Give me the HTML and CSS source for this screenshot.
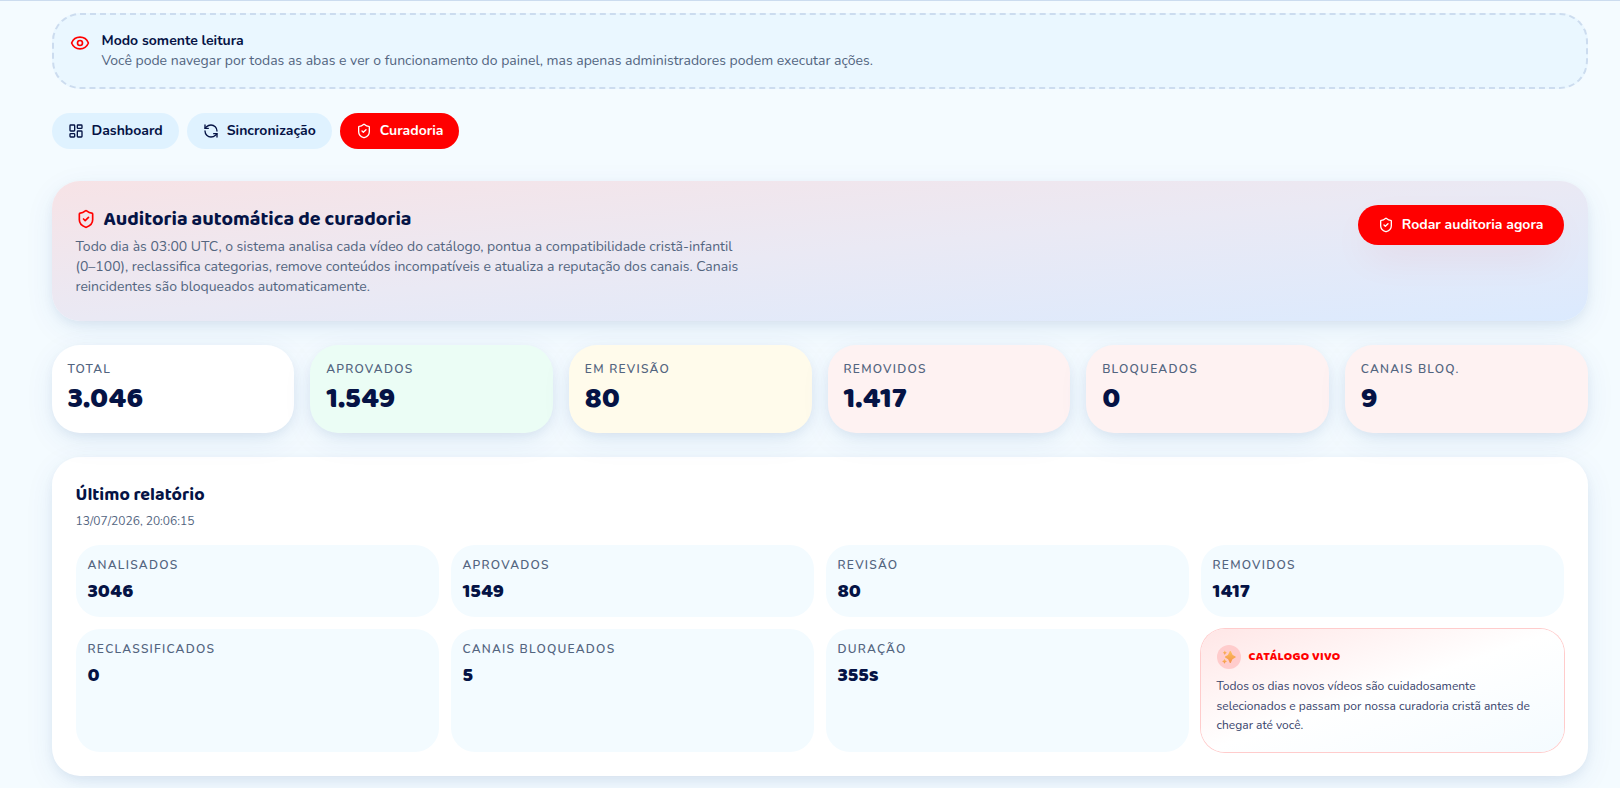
FILE: index.html
```
<!doctype html>
<html lang="pt-BR">
<head>
<meta charset="utf-8">
<meta name="viewport" content="width=device-width, initial-scale=1">
<title>Painel - Curadoria</title>
<link rel="stylesheet" href="styles.css">
</head>
<body>

	<!-- icons shared by the tabs, the hero and the notice -->
	<svg class="sprite" aria-hidden="true">
		<symbol id="icon-eye" viewBox="0 0 24 24">
			<path d="M2.062 12.348a1 1 0 0 1 0-.696 10.75 10.75 0 0 1 19.876 0 1 1 0 0 1 0 .696 10.75 10.75 0 0 1-19.876 0" />
			<circle cx="12" cy="12" r="3" />
		</symbol>
		<symbol id="icon-dashboard" viewBox="0 0 24 24">
			<rect width="7" height="9" x="3" y="3" rx="1" />
			<rect width="7" height="5" x="14" y="3" rx="1" />
			<rect width="7" height="9" x="14" y="12" rx="1" />
			<rect width="7" height="5" x="3" y="16" rx="1" />
		</symbol>
		<symbol id="icon-sync" viewBox="0 0 24 24">
			<path d="M21 12a9 9 0 0 0-9-9 9.75 9.75 0 0 0-6.74 2.74L3 8" />
			<path d="M3 3v5h5" />
			<path d="M3 12a9 9 0 0 0 9 9 9.75 9.75 0 0 0 6.74-2.74L21 16" />
			<path d="M16 16h5v5" />
		</symbol>
		<symbol id="icon-shield" viewBox="0 0 24 24">
			<path d="M20 13c0 5-3.5 7.5-7.66 8.95a1 1 0 0 1-.67-.01C7.5 20.5 4 18 4 13V6a1 1 0 0 1 1-1c2 0 4.5-1.2 6.24-2.72a1.17 1.17 0 0 1 1.52 0C14.51 3.81 17 5 19 5a1 1 0 0 1 1 1z" />
			<path d="m9 12 2 2 4-4" />
		</symbol>
	</svg>

	<main class="panel">

		<div class="notice">
			<svg class="icon icon-lg"><use href="#icon-eye" /></svg>
			<div>
				<p class="notice-title">Modo somente leitura</p>
				<p class="muted">Você pode navegar por todas as abas e ver o funcionamento do painel, mas apenas administradores podem executar ações.</p>
			</div>
		</div>

		<nav class="tabs">
			<button class="tab"><svg class="icon"><use href="#icon-dashboard" /></svg>Dashboard</button>
			<button class="tab"><svg class="icon"><use href="#icon-sync" /></svg>Sincronização</button>
			<button class="tab active"><svg class="icon"><use href="#icon-shield" /></svg>Curadoria</button>
		</nav>

		<section class="hero">
			<div class="hero-text">
				<h2><svg class="icon icon-lg"><use href="#icon-shield" /></svg>Auditoria automática de curadoria</h2>
				<p class="muted">Todo dia às 03:00 UTC, o sistema analisa cada vídeo do catálogo, pontua a compatibilidade cristã-infantil (0–100), reclassifica categorias, remove conteúdos incompatíveis e atualiza a reputação dos canais. Canais reincidentes são bloqueados automaticamente.</p>
			</div>
			<button class="run"><svg class="icon"><use href="#icon-shield" /></svg>Rodar auditoria agora</button>
		</section>

		<section class="stats">
			<div class="stat"><p class="label">Total</p><p class="value">3.046</p></div>
			<div class="stat green"><p class="label">Aprovados</p><p class="value">1.549</p></div>
			<div class="stat yellow"><p class="label">Em revisão</p><p class="value">80</p></div>
			<div class="stat red"><p class="label">Removidos</p><p class="value">1.417</p></div>
			<div class="stat red"><p class="label">Bloqueados</p><p class="value">0</p></div>
			<div class="stat red"><p class="label">Canais bloq.</p><p class="value">9</p></div>
		</section>

		<section class="report">
			<h3>Último relatório</h3>
			<p class="date">13/07/2026, 20:06:15</p>
			<div class="cells">
				<div class="cell"><p class="label">Analisados</p><p class="value">3046</p></div>
				<div class="cell"><p class="label">Aprovados</p><p class="value">1549</p></div>
				<div class="cell"><p class="label">Revisão</p><p class="value">80</p></div>
				<div class="cell"><p class="label">Removidos</p><p class="value">1417</p></div>
				<div class="cell"><p class="label">Reclassificados</p><p class="value">0</p></div>
				<div class="cell"><p class="label">Canais bloqueados</p><p class="value">5</p></div>
				<div class="cell"><p class="label">Duração</p><p class="value">355s</p></div>
				<div class="live">
					<div class="live-head">
						<span class="spark">
							<svg width="14" height="14" viewBox="0 0 14 14">
								<defs>
									<linearGradient id="gold" x1="0" y1="0" x2="0" y2="1">
										<stop offset="0" stop-color="#fdc05c" />
										<stop offset="1" stop-color="#f3924a" />
									</linearGradient>
								</defs>
								<g fill="url(#gold)">
									<path d="M8.3 1 Q9 1 9.3 2.2 Q10 5.2 12.6 6 Q13.8 6.4 13.8 7 Q13.8 7.6 12.6 8 Q10 8.8 9.3 11.8 Q9 13 8.3 13 Q7.6 13 7.3 11.8 Q6.6 8.8 4 8 Q2.9 7.6 2.9 7 Q2.9 6.4 4 6 Q6.6 5.2 7.3 2.2 Q7.6 1 8.3 1z" />
									<path d="M2.8 .6 Q3.2 2.3 4.9 2.8 Q3.2 3.3 2.8 5 Q2.4 3.3 .8 2.8 Q2.4 2.3 2.8 .6z" />
									<path d="M2.5 8.8 Q3 10.8 5 11.3 Q3 11.8 2.5 13.8 Q2 11.8 0 11.3 Q2 10.8 2.5 8.8z" />
								</g>
							</svg>
						</span>
						Catálogo vivo
					</div>
					<p>Todos os dias novos vídeos são cuidadosamente selecionados e passam por nossa curadoria cristã antes de chegar até você.</p>
				</div>
			</div>
		</section>

	</main>

</body>
</html>
```
FILE: styles.css
```
* { box-sizing: border-box; }

:root { --navy: #051345; --muted: #53657f; --red: #ff0000; --line: #ccdcef; --bg: #f4fbff; --radius: 28px;
	--shadow: 0 4px 12px -2px rgba( 20, 50, 100, 0.08 ), 0 8px 32px -4px rgba( 20, 80, 170, 0.1 ); }

html { height: 100%; overflow: hidden; }

body { background: var(--bg); border-top: 1px solid var(--line); color: var(--navy);
	font: 14px/20px Nunito, Lato, "Open Sans", sans-serif; height: 100%; margin: 0; overflow: hidden; }

h2, h3, p { margin: 0; }

button { border: none; color: inherit; cursor: pointer; font: inherit; font-weight: 700; }

.sprite { display: none; }

.icon { fill: none; flex: none; height: 16px; stroke: currentColor; stroke-linecap: round; stroke-linejoin: round;
	stroke-width: 2; width: 16px; }
.icon-lg { color: var(--red); height: 20px; width: 20px; }

.muted { color: var(--muted); }

.panel { padding: 12px 32.5px 0 51.5px; }

.notice { background: #eaf7ff; border: 2px dashed var(--line); border-radius: var(--radius); display: flex; gap: 12px; padding: 16px; }
.notice .icon { margin-top: 2px; }
.notice-title { font-weight: 700; }

.tabs { display: flex; gap: 8px; margin-top: 24px; }
.tab { align-items: center; background: #dff2ff; border-radius: 18px; display: flex; gap: 8px; height: 36px; padding: 0 16px; }
.tab.active { background: var(--red); color: #fff; }

.hero { align-items: flex-start; background: linear-gradient( to bottom right, #f7e3e6, #eae9f4 50%, #dbeafe );
	border-radius: var(--radius); box-shadow: var(--shadow); display: flex; justify-content: space-between; margin-top: 32px; padding: 24px; }
.hero-text { max-width: 672px; }
.hero h2 { align-items: center; display: flex; font: 700 20px/28px "Baloo 2", Lato, sans-serif; gap: 8px; margin-bottom: 4px; }

.run { align-items: center; background: var(--red); border-radius: 20px; box-shadow: 0 16px 40px -8px rgba( 255, 0, 0, 0.09 );
	color: #fff; display: flex; gap: 8px; height: 40px; padding: 0 20px; }

.label { color: var(--muted); font-size: 12px; font-weight: 600; letter-spacing: 1.25px; line-height: 16px; text-transform: uppercase; }
.value { font-family: "Baloo 2", Lato, sans-serif; font-weight: 800; margin-top: 4px; }

.stats { display: grid; gap: 16px; grid-template-columns: repeat( 6, 1fr ); margin-top: 24px; }
.stat { background: #fff; border-radius: var(--radius); box-shadow: var(--shadow); padding: 16px; }
.stat .value { font-size: 30px; line-height: 36px; }
.green { background: #ebfdf5; }
.yellow { background: #fffbeb; }
.red { background: #fef2f2; }

.report { background: #fff; border-radius: var(--radius); box-shadow: var(--shadow); margin-top: 24px; padding: 24px; }
.report h3 { font: 700 18px/28px "Baloo 2", Lato, sans-serif; }
.date { color: var(--muted); font-size: 12px; line-height: 16px; margin-top: 4px; }

.cells { display: grid; gap: 12px; grid-template-columns: repeat( 4, 1fr ); margin-top: 16px; }
.cell { background: #f3fbff; border-radius: 24px; padding: 12px; }
.cell .value { font-size: 20px; line-height: 28px; }

.live { background: linear-gradient( to bottom right, #ffe6e6, #fff 50%, #f4fbff ); border-radius: 24px;
	box-shadow: 0 0 0 1px #ffcccc; padding: 16px; }
.live-head { align-items: center; color: var(--red); display: flex; font: 800 12px/16px "Baloo 2", Lato, sans-serif; gap: 8px;
	letter-spacing: 0.3px; text-transform: uppercase; }
.live p { color: #37426a; font-size: 12px; line-height: 19.5px; margin-top: 8px; }

.spark { align-items: center; background: #ffcccc; border-radius: 50%; display: flex; height: 24px;
	justify-content: center; width: 24px; }
```
